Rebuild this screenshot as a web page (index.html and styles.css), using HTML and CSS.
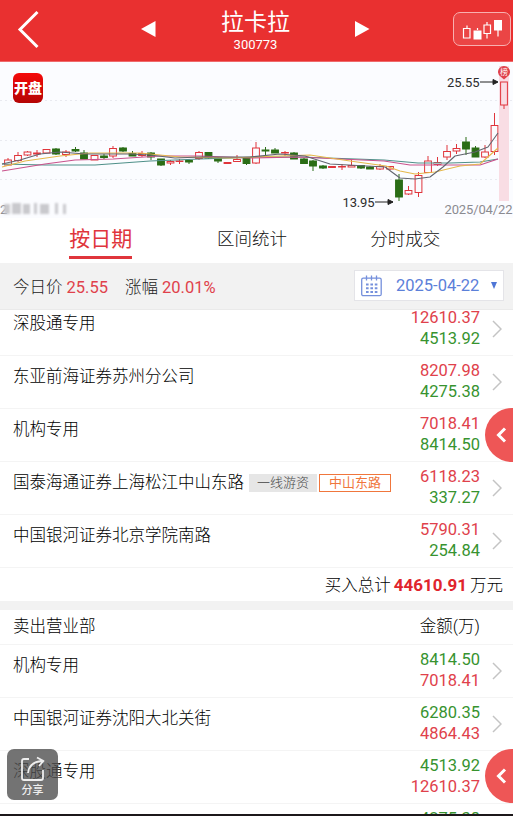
FILE: index.html
```html
<!DOCTYPE html>
<html lang="zh-CN">
  <head>
    <meta charset="UTF-8" />
    <meta name="viewport" content="width=device-width, initial-scale=1.0" />
    <title>拉卡拉 300773</title>
    <link rel="stylesheet" href="styles.css">
  </head>
  <body>
    <div class="app">
      <!-- Header -->
      <header class="header">
        <svg class="back" width="24" height="40" viewBox="0 0 24 40">
          <path d="M20.5 3 L3 20.5 L20.5 38" />
        </svg>
        <svg class="prev" width="15" height="18" viewBox="0 0 15 18"><path d="M0 9 L14.5 1 V17 Z" /></svg>
        <div class="stock">
          <h1>拉卡拉</h1>
          <span>300773</span>
        </div>
        <svg class="next" width="15" height="18" viewBox="0 0 15 18"><path d="M14.5 9 L0 1 V17 Z" /></svg>
        <button class="kline-btn">
          <svg width="42" height="26" viewBox="0 0 42 26">
            <path class="hollow" d="M3.5 9.5 h6.500 v9.500 h-6.500 z M7 9.500 v-3 M24 6 h6.500 v8.500 h-6.500 z M27 6 v-3 M27 14.500 v5" />
            <path class="solid" d="M13.500 11.500 h8 v9 h-8 z M34 1 h8 v10.500 h-8 z" />
            <path class="hollow" d="M17.500 11 v-2 M38 11 v6.500" />
          </svg>
        </button>
      </header>

      <!-- K-line chart -->
      <section class="chart">
        <svg id="kline" width="513" height="156" viewBox="0 62 513 156">
          <path class="grid" d="M0 100.500 H513 M0 140.500 H513 M0 179.500 H513" />
          <rect class="today" x="499" y="66" width="10" height="135" />
          <g id="candles"></g>
          <path class="ma ma60" d="M2 164 L45 165 L95 165 L150 161 L200 159 L260 157 L300 157 L384 160 L418 163 L450 163 L480 162 L498 159" />
          <path class="ma ma30" d="M2 171 L45 164 L75 160 L113 159 L160 156 L200 156 L250 158 L300 157 L340 159 L384 161 L410 165 L450 165 L480 165 L498 159" />
          <path class="ma ma10" d="M2 167 L25 161 L60 156 L90 153 L140 153 L180 157 L230 158 L280 156 L310 155 L350 161 L386 166 L400 171 L415 174 L435 172 L460 166 L480 164 L498 148" />
          <path class="ma ma5" d="M2 164 L20 160 L40 154 L60 152 L85 154 L130 154 L150 155 L175 158 L200 157 L250 157 L280 154 L305 156 L330 164 L385 167 L400 178 L415 179 L430 177 L443 167 L455 156 L475 152 L488 147 L498 133" />
          <path class="arrow" d="M480 82 H497 M493 79.500 L498 82 L493 84.500 Z M375 202 H393 M388 199.500 L393 202 L388 204.500 Z" />
          <path class="pin" d="M504 79.500 L500.500 76.500 A6 5.800 0 1 1 507.500 76.500 Z" />
          <text class="pin-text" x="504" y="74.500">榜</text>
          <text class="price" x="447" y="86.500" textLength="32.500">25.55</text>
          <text class="price" x="342.500" y="206.500" textLength="32">13.95</text>
          <text class="day" x="444.500" y="213.500" textLength="68">2025/04/22</text>
          <text class="day" x="0" y="213.500">2</text>
          <g class="masked">
            <rect x="4" y="204" width="6" height="10" /><rect x="12" y="203" width="9" height="11" />
            <rect x="23" y="204" width="7" height="10" /><rect x="34" y="203" width="3" height="11" />
            <rect x="40" y="204" width="9" height="10" /><rect x="55" y="203" width="3" height="11" />
            <rect x="63" y="204" width="3" height="10" />
          </g>
        </svg>
        <span class="open-badge">开盘</span>
      </section>

      <!-- Tabs -->
      <nav class="tabs">
        <a class="tab active"><span>按日期</span></a>
        <a class="tab"><span>区间统计</span></a>
        <a class="tab"><span>分时成交</span></a>
      </nav>

      <!-- Price bar -->
      <div class="price-bar">
        <span>今日价 <b>25.55</b></span>
        <span class="change">涨幅 <b>20.01%</b></span>
        <div class="date-picker">
          <svg width="21" height="22" viewBox="0 0 21 22">
            <rect x="0.700" y="3.200" width="19.500" height="17.500" rx="1.500" />
            <path d="M5.500 0.500 v5 M10.500 0.500 v5 M15.500 0.500 v5" />
            <path class="dots" d="M5 9.500 H17 M5 13.200 H17 M5 16.900 H17" />
          </svg>
          <span>2025-04-22</span>
          <i class="caret"></i>
        </div>
      </div>

      <!-- Buy / sell lists -->
      <main class="list">
        <div class="rows" id="buy"></div>
        <div class="total">买入总计<b>44610.91</b>万元</div>
        <div class="list-head"><span>卖出营业部</span><span>金额(万)</span></div>
        <div class="rows" id="sell"></div>
      </main>
      <div class="bottom-line"></div>

      <!-- Floating buttons -->
      <button class="drawer drawer-top"><svg width="12" height="18" viewBox="0 0 12 18"><path d="M10 2.500 L3.500 9 L10 15.500" /></svg></button>
      <button class="drawer drawer-bottom"><svg width="12" height="18" viewBox="0 0 12 18"><path d="M10 2.500 L3.500 9 L10 15.500" /></svg></button>
      <button class="share">
        <svg width="26" height="26" viewBox="0 0 26 26">
          <path d="M9 3 H4 Q2 3 2 5 V22 Q2 24 4 24 H21 Q23 24 23 22 V14" />
          <path d="M8 17 Q9 6 22 5 M17 1.500 L23.500 5 L19 10" />
        </svg>
        <span>分享</span>
      </button>
    </div>

    <script>
      // center x, high, low, body top, body bottom, up (1) or down (0)
      const candles = [
        [8, 158, 166, 160, 165, 1], [18, 152, 162, 155.5, 160.5, 1], [27.5, 151, 156, 152, 155, 1],
        [37, 150, 157, 153, 154, 1], [46.500, 149, 153, 149.5, 153, 1], [56, 148, 155, 149, 154, 0],
        [66, 150, 157, 152, 154.5, 1], [75.500, 147, 152, 149.5, 151, 0], [84, 150, 159, 153, 159, 0],
        [94.500, 155, 160, 155.5, 160, 1], [104, 154, 159, 156, 157.5, 0], [113, 146, 158, 148.5, 156, 1],
        [123, 147, 152, 148, 151, 0], [132.5, 151, 156, 153.5, 156, 0], [142, 151, 157, 153.5, 155.5, 1],
        [151, 152, 160, 153, 157, 0], [161, 159, 166, 159, 165, 0], [170.5, 160, 165, 161.5, 163, 1],
        [179.5, 159, 164, 161, 161.5, 1], [189, 159, 164, 160.5, 162, 0], [199, 151, 160, 152.5, 158.5, 1],
        [208.5, 152, 159, 152.5, 158, 0], [218, 157, 163, 158, 161, 0], [227.5, 162, 164, 162.5, 163.5, 1],
        [237, 155, 162, 159.5, 161.5, 1], [246.5, 158, 165, 158.5, 163.5, 0], [256, 142, 164, 148, 163, 1],
        [265.5, 147, 155, 150, 151, 0], [275, 148, 153, 150, 153, 0], [285, 151, 156, 152.5, 153, 1],
        [294, 152, 159, 153, 159, 0], [304, 158, 164, 159, 163.5, 0], [313, 160, 171, 161, 166, 0],
        [323, 165, 169, 166, 168, 0], [332, 166, 168, 166.5, 167.5, 1], [342, 164, 170, 166.5, 167, 1],
        [351.5, 160, 167, 165.5, 167, 1], [361, 165, 169, 165.5, 168, 0], [370, 166, 169, 167, 169, 0],
        [380, 164, 170, 166.5, 169, 1], [390, 166, 170, 166.5, 169, 1], [399, 174, 201, 180, 197, 0],
        [408.5, 186, 195, 190.5, 194, 1], [418.5, 172, 197, 175.5, 192.5, 1], [428, 156, 173, 161, 172.5, 1],
        [437.5, 157, 166, 162.5, 164.5, 1], [447, 145, 160, 151.5, 157, 1], [456.5, 144, 154, 148.5, 151, 1],
        [466, 137, 155, 142, 149, 0], [475.5, 146, 157, 148, 157, 0], [485, 145, 158, 152, 157, 1],
        [494.5, 113, 155, 125.5, 151.5, 1], [504, 82, 109, 82, 105, 1]
      ];
      document.getElementById("candles").innerHTML = candles.map(([x, hi, lo, top, bottom, up]) =>
        `<g class="${up ? "up" : "down"}">
          <path d="M${x} ${hi} V${top} M${x} ${bottom} V${lo}" />
          <rect x="${x - 3.4}" y="${top}" width="6.800" height="${bottom - top}" />
        </g>`
      ).join("");

      const buy = [
        { name: "深股通专用", amounts: ["12610.37", "4513.92"] },
        { name: "东亚前海证券苏州分公司", amounts: ["8207.98", "4275.38"] },
        { name: "机构专用", amounts: ["7018.41", "8414.50"] },
        { name: "国泰海通证券上海松江中山东路", tags: ["一线游资", "中山东路"], amounts: ["6118.23", "337.27"] },
        { name: "中国银河证券北京学院南路", amounts: ["5790.31", "254.84"] }
      ];
      const sell = [
        { name: "机构专用", amounts: ["8414.50", "7018.41"] },
        { name: "中国银河证券沈阳大北关街", amounts: ["6280.35", "4864.43"] },
        { name: "深股通专用", amounts: ["4513.92", "12610.37"] },
        { name: "", amounts: ["4275.38"] }
      ];

      function renderRows(id, rows) {
        document.getElementById(id).innerHTML = rows.map((row) => {
          const tags = (row.tags || []).map((t, i) => `<span class="tag ${i ? "tag-line" : ""}">${t}</span>`).join("");
          return `<div class="row ${id}">
            <div class="name">${row.name}${tags}</div>
            <div class="amounts"><span>${row.amounts[0]}</span><span>${row.amounts[1] || ""}</span></div>
            <svg class="more" width="10" height="18" viewBox="0 0 10 18"><path d="M1 1 L9 9 L1 17" /></svg>
          </div>`;
        }).join("");
      }
      renderRows("buy", buy);
      renderRows("sell", sell);
    </script>
  </body>
</html>
```
FILE: styles.css
```css
/* Global Styles */
* {
  margin: 0;
  padding: 0;
  box-sizing: border-box;
}

body {
  font-family: Roboto, "Noto Sans CJK SC", sans-serif;
  font-size: 16.5px;
  color: #222;
  background: #fff;
}

button {
  border: none;
  font-family: inherit;
}

b {
  font-weight: normal;
}

svg {
  display: block;
  flex: none;
}

path {
  fill: none;
}

.app {
  position: relative;
  width: 513px;
  height: 816px;
  overflow: hidden;
  display: flex;
  flex-direction: column;
}

/* Header */
.header {
  flex: none;
  height: 62px;
  background: #e93030;
  border-bottom: 1px solid #ef6a6c;
  display: flex;
  align-items: center;
  padding: 0 2px 3px 17px;
  color: #fff;
}

.back path {
  stroke: #fff;
  stroke-width: 3;
}

.prev path,
.next path {
  fill: #fff;
}

.prev {
  margin-left: 100px;
}

.stock {
  width: 199px;
  text-align: center;
  display: flex;
  flex-direction: column;
}

.stock h1 {
  font-size: 23px;
  font-weight: normal;
  line-height: 28px;
  margin-top: 4px;
}

.stock span {
  font-size: 13px;
  line-height: 16px;
}

.kline-btn {
  width: 58px;
  height: 34px;
  margin-left: auto;
  border: 1px solid #f8b0b0;
  border-radius: 7px;
  background: #eb4545;
  padding: 6px 6px 4px;
}

.kline-btn .hollow {
  stroke: #fff;
  stroke-width: 1.2;
}

.kline-btn .solid {
  fill: #fff;
}

/* Chart */
.chart {
  position: relative;
  flex: none;
  height: 156px;
  background: #fbfcff;
}

.grid {
  stroke: #e9eaf0;
  stroke-dasharray: 2 3;
}

.today {
  fill: #f9dde4;
}

.up {
  stroke: #e0353c;
  fill: none;
}

.down {
  stroke: #2b6d16;
  fill: #2b6d16;
}

.ma {
  stroke-width: 1.1;
  stroke-linejoin: round;
}

.ma5 {
  stroke: #62656f;
}

.ma10 {
  stroke: #e5b84c;
}

.ma30 {
  stroke: #c9528c;
}

.ma60 {
  stroke: #4f9089;
}

.arrow {
  stroke: #222;
  fill: #222;
}

.pin {
  fill: #e0414b;
}

.pin-text {
  font-size: 8px;
  fill: #fff;
  text-anchor: middle;
}

.price {
  font-size: 13px;
  fill: #2c2c2c;
}

.day {
  font-size: 13px;
  fill: #8b8b91;
}

.masked {
  fill: #c9c9cd;
  filter: blur(1px);
}

.open-badge {
  position: absolute;
  left: 13px;
  top: 11px;
  width: 30px;
  height: 30px;
  border-radius: 6px;
  background: linear-gradient(#f50a0a, #b40505);
  color: #fff;
  font-size: 14px;
  font-weight: 900;
  line-height: 30px;
  text-align: center;
}

/* Tabs */
.tabs {
  flex: none;
  height: 45px;
  display: flex;
  padding: 0 32px 0 25px;
  font-size: 17.5px;
  font-weight: 300;
  color: #111;
}

.tab {
  flex: 1;
  text-align: center;
  line-height: 43px;
}

.tab:nth-child(2) {
  padding-right: 2px;
}

.tab span {
  display: inline-block;
  height: 41px;
}

.tab.active {
  font-size: 21px;
  font-weight: 400;
  color: #e0353c;
}

.tab.active span {
  border-bottom: 3px solid #e0353c;
}

/* Price bar */
.price-bar {
  flex: none;
  height: 47px;
  background: #f2f2f2;
  border-bottom: 1px solid #eaeaea;
  display: flex;
  align-items: center;
  padding: 0 9px 1px 13px;
  font-weight: 300;
}

.price-bar b {
  font-weight: 400;
  color: #e0414b;
}

.change {
  margin-left: 17px;
}

.date-picker {
  width: 150px;
  height: 31px;
  margin-left: auto;
  display: flex;
  align-items: center;
  padding: 0 6px;
  background: #fff;
  border: 1px solid #e4e4e8;
  font-weight: 400;
  color: #5c80d9;
}

.date-picker span {
  margin-left: 14px;
}

.date-picker rect,
.date-picker path {
  fill: none;
  stroke: #7590dc;
  stroke-width: 1.3;
}

.date-picker .dots {
  stroke-width: 2;
  stroke-dasharray: 2.6 1.8;
}

.caret {
  margin-left: auto;
  border: 3px solid transparent;
  border-top: 7px solid #4f76d6;
  border-bottom: none;
}

/* List */
.list {
  flex: 1;
  min-height: 0;
  overflow: hidden;
}

.rows {
  display: flex;
  flex-direction: column;
}

#buy {
  margin-top: -7px;
}

.row {
  height: 53px;
  border-bottom: 1px solid #f4f4f4;
  display: flex;
  align-items: center;
  padding: 0 11px 0 13px;
}

.name {
  flex: 1;
  display: flex;
  align-items: center;
  padding-bottom: 11px;
  line-height: 24px;
  font-weight: 300;
  color: #000;
}

.tag {
  height: 18px;
  margin-left: 5px;
  padding: 0 8px;
  font-size: 13px;
  line-height: 18px;
  background: #e6e6e6;
  color: #444;
}

.tag-line {
  margin-left: 2px;
  padding: 0 9px;
  line-height: 16px;
  background: #fff;
  border: 1px solid #f0763c;
  font-weight: 400;
  color: #f0763c;
}

.amounts {
  display: flex;
  flex-direction: column;
  text-align: right;
  margin-right: 12px;
}

.amounts span {
  height: 21px;
  line-height: 20px;
}

.buy .amounts span:first-child,
.sell .amounts span:last-child {
  color: #e0414b;
}

.buy .amounts span:last-child,
.sell .amounts span:first-child {
  color: #37932f;
}

.more path {
  stroke: #c4c4c4;
  stroke-width: 1.5;
}

.total {
  height: 33px;
  line-height: 34px;
  padding-right: 10px;
  text-align: right;
  font-weight: 300;
  color: #000;
}

.total b {
  margin: 0 3px;
  font-size: 17px;
  font-weight: bold;
  color: #e0242c;
}

.list-head {
  height: 44px;
  border-top: 9px solid #f2f2f2;
  border-bottom: 1px solid #f4f4f4;
  display: flex;
  justify-content: space-between;
  align-items: center;
  padding: 0 33px 5px 13px;
  font-weight: 300;
  color: #000;
}

.bottom-line {
  flex: none;
  height: 2px;
  background: #1c181a;
}

/* Floating buttons */
.drawer {
  position: absolute;
  right: -26px;
  width: 54px;
  height: 54px;
  border-radius: 50%;
  background: #ee5656;
  padding-left: 10px;
}

.drawer path {
  stroke: #fff;
  stroke-width: 3;
}

.drawer-top {
  top: 408px;
}

.drawer-bottom {
  top: 749px;
}

.share {
  position: absolute;
  left: 7px;
  top: 749px;
  width: 51px;
  height: 51px;
  border-radius: 7px;
  background: rgba(75, 75, 75, 0.78);
  color: #eee;
  font-size: 11px;
  font-weight: 500;
  line-height: 17px;
  display: flex;
  flex-direction: column;
  align-items: center;
  padding-top: 7px;
}

.share path {
  stroke: #eee;
  stroke-width: 1.8;
  stroke-linejoin: round;
}
```
